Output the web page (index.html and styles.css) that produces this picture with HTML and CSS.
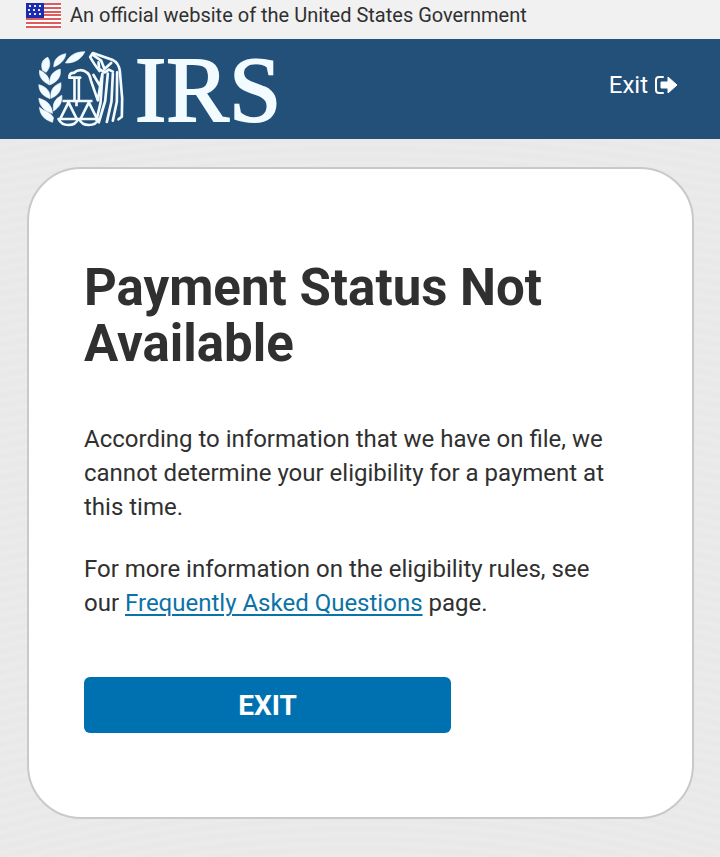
FILE: index.html
```html
<!DOCTYPE html>
<html lang="en">
<head>
<meta charset="utf-8">
<meta name="viewport" content="width=device-width, initial-scale=1">
<title>Payment Status Not Available</title>
<link rel="stylesheet" href="styles.css">
</head>
<body>
<div class="banner">
  <svg class="flag" viewBox="0 0 35 25" aria-hidden="true">
    <path fill="#fff" d="M0 0h35v25H0z"/>
    <path fill="#df5c5c" d="M0 0h35v2H0zM0 4h35v2H0zM0 8h35v2H0zM0 11h35v2H0zM0 15h35v2H0zM0 19h35v2H0zM0 23h35v2H0z"/>
    <path fill="#1c2cae" d="M0 0h18v15H0z"/>
    <path stroke="#e4e8ff" stroke-width="2" stroke-dasharray="2 3" d="M3 3h13M2 7h15M3 11h13"/>
  </svg>
  <span>An official website of the United States Government</span>
</div>
<header class="header">
  <a class="logo" href="#">
    <svg class="emblem" viewBox="24 18 260 228" aria-hidden="true">
      <g fill="#f2fbff" stroke="#f2fbff" stroke-width="2" stroke-linejoin="round">
        <path d="M71 66C70 45 82 31 107 26c-2 16-12 29-36 40z"/>
        <path d="M106 54c10-20 27-34 58-34-10 21-30 35-58 34z"/>
        <path d="M37 76c-6-20 0-33 16-39 10 16 6 32-5 45z"/>
        <path d="M28 76c20 8 31 22 30 44C38 110 26 97 28 76z"/>
        <path d="M60 119c-4-24 6-39 30-47 4 23-8 38-30 47z"/>
        <path d="M26 119c22 6 35 19 34 42-21-7-34-21-34-42z"/>
        <path d="M63 160c-4-24 6-37 29-47 3 23-8 37-29 47z"/>
        <path d="M26 160c24 6 40 22 41 45-24-6-39-22-41-45z"/>
        <path d="M70 198c-3-24 4-36 25-47 2 20-7 36-25 47z"/>
        <path d="M28 187c12 12 34 14 42 31l-3 14c-26-9-37-22-39-45z"/>
      </g>
      <g fill="none" stroke="#f2fbff" stroke-width="8" stroke-linejoin="round" stroke-linecap="round">
        <path d="M118 98c-2-10 4-15 14-14 9-11 27-11 39-1 8 6 9 14 11 23l21 60 8-48"/>
        <path d="M118 98h32M133 99v69M146 99v69"/>
        <path d="M208 78c-10-13-20-26-28-42l8-12 58 20c15 7 21 18 23 34l7 82-1 55-10 8"/>
        <path d="M187 29l26 18 10 25 20-18M205 52l2 20 17 10 12-8 12 6"/>
        <path d="M190 90l19 32 8-36-6 88-12 51M233 86l-8 82-19 64M248 86l-4 83-14 62M261 82l-1 88-12 57"/>
      </g>
      <g fill="none" stroke="#f2fbff" stroke-width="8" stroke-linejoin="round">
        <path d="M97 168h90M139 168v16M115 172l-25 50M115 172l25 50M176 172l-25 50M176 172l25 50"/>
        <path d="M85 222h59c-10 24-48 24-59 0zM147 222h59c-11 24-49 24-59 0z"/>
      </g>
    </svg>
    <span class="wordmark">IRS</span>
  </a>
  <a class="exit-link" href="#">Exit
    <svg class="exit-icon" viewBox="0 0 24 20" aria-hidden="true">
      <path fill="none" stroke="#fff" stroke-width="2" stroke-linecap="round" d="M9 2H5Q2 2 2 5v10q0 3 3 3h4"/>
      <path fill="#fff" stroke="#fff" stroke-linejoin="round" d="M7 7h7V2l9 8-9 8v-5H7z"/>
    </svg>
  </a>
</header>
<main class="page">
  <section class="card">
    <h1>Payment Status Not Available</h1>
    <p>According to information that we have on file, we cannot determine your eligibility for a payment at this time.</p>
    <p>For more information on the eligibility rules, see our <a class="faq" href="#">Frequently Asked Questions</a> page.</p>
    <button class="exit-button" type="button">EXIT</button>
  </section>
</main>
</body>
</html>
```
FILE: styles.css
```css
* {
  box-sizing: border-box;
}

body {
  margin: 0;
  min-height: 100vh;
  display: flex;
  flex-direction: column;
  background: #e9e9e9;
  color: #303030;
  font-family: Roboto, "Liberation Sans", sans-serif;
}

.banner {
  display: flex;
  align-items: center;
  gap: 9px;
  padding: 3px 26px 11px;
  background: #f1f1f1;
  font-size: 20px;
  line-height: 25px;
}

.flag {
  width: 35px;
  height: 25px;
}

.header {
  display: flex;
  align-items: center;
  justify-content: space-between;
  height: 100px;
  padding: 0 42px 0 38px;
  background: #235078;
}

.logo {
  display: flex;
  align-items: center;
  gap: 10px;
  color: #f2fbff;
  text-decoration: none;
}

.emblem {
  width: 87px;
  height: 76px;
}

.wordmark {
  font-family: "Liberation Serif", serif;
  font-size: 94px;
  line-height: 100px;
  -webkit-text-stroke: 2px #f2fbff;
}

.exit-link {
  display: flex;
  align-items: center;
  gap: 6px;
  padding-bottom: 8px;
  color: #fff;
  font-size: 24px;
  text-decoration: none;
}

.exit-icon {
  width: 24px;
  height: 20px;
}

.page {
  flex: 1;
  padding: 28px 26px 38px 27px;
  background: repeating-radial-gradient(circle at 50% 2000px, #e8e8e8 0, #ebebeb 5px, #e8e8e8 10px);
}

.card {
  padding: 91px 72px 84px 55px;
  border: 2px solid #c9c9c9;
  border-radius: 54px;
  background: #fff;
}

h1 {
  margin: 0 0 50px;
  font-size: 51px;
  line-height: 56px;
}

p {
  margin: 0 0 28px;
  font-size: 24px;
  line-height: 34px;
}

.faq {
  color: #0b72a8;
  text-decoration-thickness: 2px;
  text-underline-offset: 3px;
}

.exit-button {
  display: block;
  width: 100%;
  max-width: 367px;
  height: 56px;
  margin-top: 57px;
  border: 0;
  border-radius: 6px;
  background: #0071b0;
  color: #fff;
  font-family: inherit;
  font-size: 28px;
  font-weight: 700;
}
```
